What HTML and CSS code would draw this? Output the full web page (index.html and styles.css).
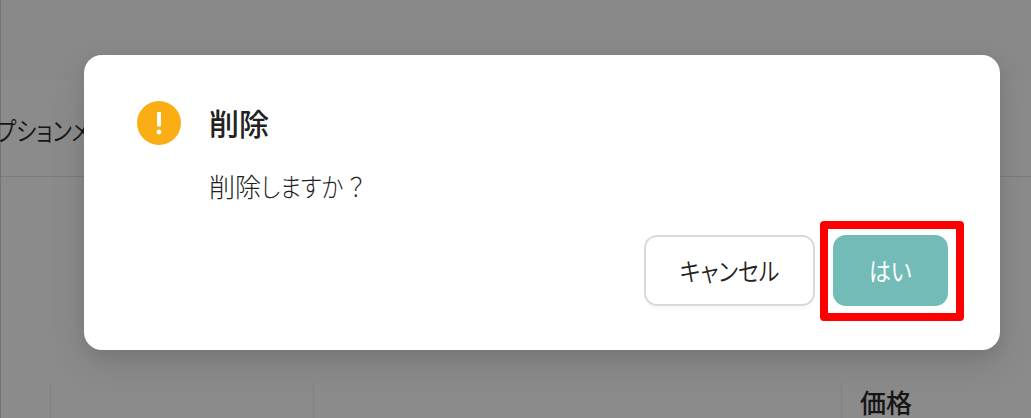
FILE: index.html
```html
<!DOCTYPE html>
<html lang="ja">
<head>
    <meta charset="UTF-8">
    <meta name="viewport" content="width=device-width, initial-scale=1.0">
    <title>削除</title>
    <link rel="stylesheet" href="styles.css">
</head>
<body>
    <div class="page">
        <div class="page-top"></div>
        <div class="tabs">
            <span class="tab">プションメ</span>
        </div>
        <div class="page-body"></div>
        <div class="table-head">
            <div class="cell cell-check"></div>
            <div class="cell cell-name"></div>
            <div class="cell cell-option"></div>
            <div class="cell cell-price">価格</div>
        </div>
    </div>

    <div class="modal-mask">
        <div class="modal">
            <div class="modal-content">
                <svg class="warning-icon" viewBox="0 0 44 44" width="44" height="44">
                    <circle cx="22" cy="22" r="22" fill="#fbad14"/>
                    <rect x="20" y="11" width="4" height="14.5" rx="0.8" fill="#fff"/>
                    <circle cx="22" cy="31" r="2.4" fill="#fff"/>
                </svg>
                <div class="modal-text">
                    <h3 class="modal-title">削除</h3>
                    <p class="modal-message">削除<span class="kana">しますか<span class="mark">？</span></span></p>
                </div>
            </div>
            <div class="modal-buttons">
                <button class="btn btn-cancel"><span class="label">キャンセル</span></button>
                <div class="highlight">
                    <button class="btn btn-ok"><span class="label">はい</span></button>
                </div>
            </div>
        </div>
    </div>
</body>
</html>
```
FILE: styles.css
```css
* {
    box-sizing: border-box;
}
body {
    margin: 0;
    height: 418px;
    overflow: hidden;
    background-color: #8b8b8b;
    font-family: "Noto Sans CJK JP", sans-serif;
    color: #161616;
}
.page {
    display: flex;
    flex-direction: column;
    height: 418px;
    border-left: 1px solid #747474;
}
.page-top {
    flex-shrink: 0;
    height: 80px;
    background-color: #898989;
}
.tabs {
    display: flex;
    flex-shrink: 0;
    align-items: center;
    height: 97px;
    padding-top: 3px;
    border-bottom: 1px solid #7c7c7c;
}
.tab {
    margin-left: -5px;
    font-size: 26px;
    font-weight: 350;
    line-height: 36px;
    white-space: nowrap;
    font-feature-settings: "palt";
    transform: scaleX(0.84);
    transform-origin: left;
}
.page-body {
    flex-shrink: 0;
    height: 206px;
}
.table-head {
    display: flex;
    flex: 1;
}
.cell {
    border-right: 1px solid #828282;
}
.cell-check {
    width: 50px;
}
.cell-name {
    width: 263px;
}
.cell-option {
    width: 528px;
}
.cell-price {
    flex: 1;
    border-right: none;
    padding-left: 18px;
    font-size: 26px;
    font-weight: 500;
    line-height: 38px;
}
.modal-mask {
    position: absolute;
    top: 0;
    left: 0;
    width: 1031px;
    height: 418px;
    padding: 55px 31px 0 84px;
}
.modal {
    height: 295px;
    padding: 46px 36px 29px 53px;
    border-radius: 18px;
    background: #fff;
    box-shadow: 0 13px 36px rgba(0, 0, 0, 0.12), 0 6px 14px rgba(0, 0, 0, 0.06);
}
.modal-content {
    display: flex;
    height: 120px;
}
.warning-icon {
    margin-right: 28px;
}
.modal-title {
    margin: 0;
    font-size: 30px;
    font-weight: 500;
    line-height: 42px;
    color: #222;
}
.modal-message {
    margin: 25px 0 0;
    font-size: 26px;
    font-weight: 300;
    line-height: 36px;
    color: #222;
}
.kana {
    display: inline-block;
    font-weight: 300;
    font-feature-settings: "palt";
    transform: scaleX(0.87);
    transform-origin: left;
}
.mark {
    margin-left: 5px;
}
.modal-buttons {
    display: flex;
    justify-content: flex-end;
    align-items: center;
}
.btn {
    height: 71px;
    padding: 0;
    border-radius: 13px;
    font-family: inherit;
    font-size: 25px;
    font-weight: 350;
    font-feature-settings: "palt";
}
.label {
    display: inline-block;
    transform: translateY(-1px) scaleX(0.88);
}
.btn-cancel {
    width: 171px;
    margin: 0 5px 1px 0;
    border: 2px solid #d9d9d9;
    background: #fff;
    color: #222;
    box-shadow: 0 4px 2px rgba(0, 0, 0, 0.02);
}
.btn-ok {
    display: block;
    width: 115px;
    border: none;
    background: #72bbb6;
    color: #fff;
    font-weight: 400;
}
.highlight {
    width: 144px;
    height: 100px;
    padding: 6px 6px 6px 5px;
    border: 8px solid #f00;
    border-radius: 4px;
}
```
